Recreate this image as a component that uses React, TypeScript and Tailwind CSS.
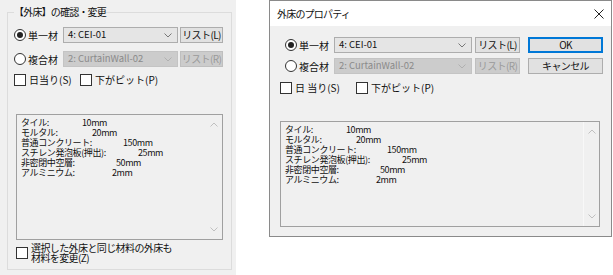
import { ReactNode } from 'react'

const FONT = 'font-["Noto_Sans_CJK_JP",sans-serif]'

interface Layer {
  label: string
  value: string
  pad:   string
}

const LAYERS: Layer[] = [
  { label: 'タイル:',              value: '10mm',  pad: 'w-[61px]'  },
  { label: 'モルタル:',            value: '20mm',  pad: 'w-[71px]'  },
  { label: '普通コンクリート:',      value: '150mm', pad: 'w-[102px]' },
  { label: 'スチレン発泡板(押出):',  value: '25mm',  pad: 'w-[117px]' },
  { label: '非密閉中空層:',         value: '50mm',  pad: 'w-[95px]'  },
  { label: 'アルミニウム:',         value: '2mm',   pad: 'w-[91px]'  },
]

function Chevron({ up, color }: { up?: boolean; color: string }) {
  return (
    <svg width="8" height="5" viewBox="0 0 8 5" className="block">
      <path d={up ? 'M0.5 4.5 L4 1 L7.5 4.5' : 'M0.5 0.5 L4 4 L7.5 0.5'} fill="none" stroke={color} strokeWidth="1" />
    </svg>
  )
}

function Radio({ checked }: { checked?: boolean }) {
  return (
    <span className="w-[12px] h-[12px] rounded-full border border-[#333] bg-white flex items-center justify-center shrink-0">
      {checked && <span className="w-[6px] h-[6px] rounded-full bg-[#222]" />}
    </span>
  )
}

function Check() {
  return <span className="w-[12px] h-[12px] border border-[#333] bg-white shrink-0" />
}

function Combo({ text, disabled, width }: { text: string; disabled?: boolean; width: string }) {
  return (
    <div
      className={`${width} h-[16px] flex items-center justify-between pl-[4px] pr-[5px] border text-[9.5px] leading-none whitespace-nowrap ${
        disabled ? 'bg-[#cccccc] border-[#c4c4c4] text-[#8a8a8a]' : 'bg-[#e5e5e5] border-[#adadad] text-[#111]'
      }`}
    >
      <span>{text}</span>
      <Chevron color={disabled ? '#b0b0b0' : '#777'} />
    </div>
  )
}

function Btn({ children, disabled, width, primary }: { children: ReactNode; disabled?: boolean; width: string; primary?: boolean }) {
  return (
    <div
      className={`${width} h-[16px] flex items-center justify-center text-[10px] leading-none whitespace-nowrap tracking-[-0.6px] ${
        disabled
          ? 'bg-[#cccccc] border border-[#bfbfbf] text-[#9a9a9a]'
          : primary
            ? 'bg-[#e1e1e1] border-2 border-[#0078d7] text-[#111]'
            : 'bg-[#e1e1e1] border border-[#adadad] text-[#111]'
      }`}
    >
      {children}
    </div>
  )
}

function LayerBox({ width, height, lightTrack }: { width: string; height: string; lightTrack?: boolean }) {
  return (
    <div className={`${width} ${height} flex border border-[#a0a0a0] bg-[#f0f0f0]`}>
      <div className="flex-1 pl-[4px] pt-[3px] text-[9px] leading-[10px] tracking-[-0.4px] text-[#111]">
        {LAYERS.map(l => (
          <div key={l.label} className="flex h-[10px] whitespace-nowrap">
            <span className={`${l.pad} shrink-0`}>{l.label}</span>
            <span>{l.value}</span>
          </div>
        ))}
      </div>
      <div className={`w-[16px] flex flex-col items-center justify-between py-[7px] ${lightTrack ? 'border-l border-[#f8f8f8]' : ''}`}>
        <Chevron up color="#c0c0c0" />
        <Chevron color="#c0c0c0" />
      </div>
    </div>
  )
}

export default function App() {
  return (
    <div className={`w-[613px] h-[275px] bg-white flex text-[#111] ${FONT}`}>
      {/* left: embedded panel */}
      <div className="w-[236px] h-full bg-[#f0f0f0] pl-[7px]">
        <fieldset className="mt-[5px] w-[225px] h-[265px] border border-[#dcdcdc] pl-[6px]">
          <legend className="text-[10px] leading-[14px] tracking-[-0.8px]">【外床】の確認・変更</legend>

          <div className="mt-[8px] flex flex-col gap-[8px]">
            <div className="flex items-center">
              <div className="w-[49px] flex items-center gap-[2px] text-[10px]">
                <Radio checked />
                <span>単一材</span>
              </div>
              <Combo text="4: CEI-01" width="w-[115px]" />
              <div className="ml-[2px]"><Btn width="w-[43px]">リスト(L)</Btn></div>
            </div>
            <div className="flex items-center">
              <div className="w-[49px] flex items-center gap-[2px] text-[10px]">
                <Radio />
                <span>複合材</span>
              </div>
              <Combo text="2: CurtainWall-02" width="w-[115px]" disabled />
              <div className="ml-[2px]"><Btn width="w-[43px]" disabled>リスト(R)</Btn></div>
            </div>
          </div>

          <div className="mt-[7px] flex items-center text-[10px] leading-none">
            <Check />
            <span className="ml-[3px] w-[51px]">日当り(S)</span>
            <Check />
            <span className="ml-[3px]">下がピット(P)</span>
          </div>

          <div className="mt-[28px] ml-[2px]">
            <LayerBox width="w-[207px]" height="h-[126px]" />
          </div>

          <div className="mt-[3px] ml-[2px] flex items-center gap-[3px]">
            <Check />
            <span className="text-[10px] leading-[10px] tracking-[-0.6px]">
              選択した外床と同じ材料の外床も<br />材料を変更(Z)
            </span>
          </div>
        </fieldset>
      </div>

      {/* right: dialog */}
      <div className="ml-[33px] w-[343px] h-[237px] border border-[#8a8a8a] flex flex-col">
        <div className="h-[25px] bg-white flex items-center justify-between pl-[7px] pr-[7px]">
          <span className="text-[10px] tracking-[-0.8px]">外床のプロパティ</span>
          <svg width="10" height="10" viewBox="0 0 10 10">
            <path d="M0.5 0.5 L9.5 9.5 M9.5 0.5 L0.5 9.5" stroke="#222" strokeWidth="1" />
          </svg>
        </div>
        <div className="flex-1 bg-[#f0f0f0] pl-[15px] pt-[11px]">
          <div className="flex flex-col gap-[5px]">
            <div className="flex items-center">
              <div className="w-[49px] flex items-center gap-[2px] text-[10px]">
                <Radio checked />
                <span>単一材</span>
              </div>
              <Combo text="4: CEI-01" width="w-[138px]" />
              <div className="ml-[3px]"><Btn width="w-[45px]">リスト(L)</Btn></div>
              <div className="ml-[8px]"><Btn width="w-[75px]" primary>OK</Btn></div>
            </div>
            <div className="flex items-center">
              <div className="w-[49px] flex items-center gap-[2px] text-[10px]">
                <Radio />
                <span>複合材</span>
              </div>
              <Combo text="2: CurtainWall-02" width="w-[138px]" disabled />
              <div className="ml-[3px]"><Btn width="w-[45px]" disabled>リスト(R)</Btn></div>
              <div className="ml-[8px]"><Btn width="w-[75px]">キャンセル</Btn></div>
            </div>
          </div>

          <div className="mt-[8px] -ml-[5px] flex items-center text-[10px] leading-none">
            <Check />
            <span className="ml-[3px] w-[61px]">日 当り(S)</span>
            <Check />
            <span className="ml-[3px]">下がピット(P)</span>
          </div>

          <div className="mt-[27px] -ml-[5px]">
            <LayerBox width="w-[320px]" height="h-[106px]" lightTrack />
          </div>
        </div>
      </div>
    </div>
  )
}
